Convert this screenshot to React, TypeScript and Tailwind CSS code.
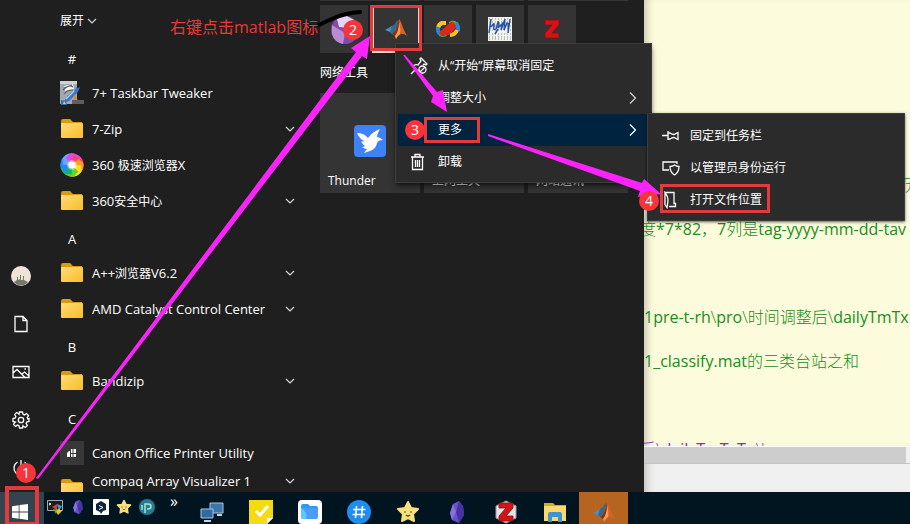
import type { ReactNode } from "react";

function Folder() {
  return (
    <svg viewBox="0 0 24 24" className="size-6 shrink-0" aria-hidden="true">
      <defs>
        <linearGradient id="folder" x1="0" y1="0" x2="1" y2="1">
          <stop offset="0" stopColor="#ffdc72" />
          <stop offset="1" stopColor="#f8bd2c" />
        </linearGradient>
      </defs>
      <path d="M1 4q0-2 2-2h7l3 3h9v6H1z" fill="#d99a12" />
      <rect x="1" y="6" width="22" height="15" rx="1" fill="url(#folder)" />
    </svg>
  );
}

function Tweaker() {
  return (
    <svg viewBox="0 0 24 24" className="size-6 shrink-0" aria-hidden="true">
      <path d="M0 0h17v23H0z" fill="#a4a9b0" />
      <path d="M0 0h17v3H0z" fill="#d0d2d5" />
      <path d="M4 5l9-2 1 5-9 2z" fill="#f2f2ee" />
      <path d="M3 9q6-6 10-3M4 13q3-4 9-4M4 7l8-3" stroke="#555b66" strokeWidth="1.2" fill="none" />
      <path d="M3 22l5-8 7-5 1-3 2 1 2-1-2 5-9 9z" fill="#3d77bd" />
      <path d="M6 18l8-8" stroke="#a9d0f5" strokeWidth="1.5" />
      <path d="M13 20l2-7 3 7z" fill="#d98b2b" />
      <path d="M12 19h12v4H12z" fill="#5f5f62" />
      <path d="M1 19l5 1 1 4H1z" fill="#2d6fbb" />
      <path d="M4 20l2 3H3z" fill="#f1d13a" />
    </svg>
  );
}

function Swirl() {
  const petals = ["#ff3f6e", "#ff9a1f", "#ffe11c", "#62d52a", "#12b07a", "#2288ff", "#6aa6ff", "#e545e0"];
  return (
    <svg viewBox="-12 -12 24 24" className="size-6 shrink-0" aria-hidden="true">
      {petals.map((color, i) => (
        <path key={color} d="M0 -3C5 -7 9 -4 11.500 0A11.500 11.500 0 0 0 4 -10.800C1 -11.500 -3 -9 0 -3z" fill={color} transform={`rotate(${i * 45 + 20})`} />
      ))}
      {petals.map((color, i) => (
        <path key={color} d="M0 0L-3 -9A9.500 9.500 0 0 1 5 -8z" fill={color} transform={`rotate(${i * 45 + 20})`} />
      ))}
      <circle r="5" fill="#fff" fillOpacity=".4" />
      <circle r="3.600" fill="#fff" />
    </svg>
  );
}

function Printer() {
  return (
    <svg viewBox="0 0 24 24" className="size-6 shrink-0" aria-hidden="true">
      <rect width="24" height="24" fill="#383838" />
      <path d="M7 16v-4l2-2h1v6zM11 8h5v4h-5zM11 13h5v3h-5z" fill="#fff" />
      <path d="M13 8v8" stroke="#383838" />
    </svg>
  );
}

function Chevron({ right = false, className = "" }: { right?: boolean; className?: string }) {
  return (
    <svg viewBox="0 0 12 12" className={className} fill="none" stroke="currentColor" aria-hidden="true">
      <path d={right ? "M3 0.500l5.500 5.500-5.500 5.500" : "M2 4l4 4 4-4"} strokeWidth="1.200" />
    </svg>
  );
}

function Matlab({ className = "size-6" }: { className?: string }) {
  return (
    <svg viewBox="0 0 24 24" className={className} aria-hidden="true">
      <path d="M1 13l7-4 4 3-4 5-2-2z" fill="#4a8fc0" />
      <path d="M8 9q3-1 5-6l1 2-3 10-3 2-2-2z" fill="#2b6d96" />
      <path d="M15 2q2 2 4 9l4 8q-4-3-6-2-3 1-5 5-1-4-4-5 5-3 7-15z" fill="#d9622b" />
      <path d="M15 2q1 9-1 14l-2 6q-1-4-4-5 5-3 7-15z" fill="#8e2c1b" />
      <path d="M15 5q2 7 1 12-2 1-4 5l-1-3q4-5 4-14z" fill="#f3a044" />
    </svg>
  );
}

function ZIcon({ boxed = false }: { boxed?: boolean }) {
  return (
    <svg viewBox="0 0 24 24" className="size-6" aria-hidden="true">
      {boxed && <path d="M12 1l10 5v12l-10 5L2 18V6z" fill="#e2e4e6" stroke="#9a9c9f" />}
      <path d="M5 3h14v5l-7 8h7v5H5v-5l7-8H5z" fill="#d41414" stroke="#8b0c0c" strokeWidth=".8" />
    </svg>
  );
}

function Crystal({ className = "size-6" }: { className?: string }) {
  return (
    <svg viewBox="0 0 24 24" className={className} aria-hidden="true">
      <path d="M14 1l4 5 1 9-5 8-7-3-2-7 3-9z" fill="#6a50cf" />
      <path d="M14 1l-3 11 3 11 5-8-1-9z" fill="#4732a0" />
      <path d="M8 4l3 8-4 8-2-7z" fill="#8a70e0" />
    </svg>
  );
}

function Star({ className = "size-6" }: { className?: string }) {
  return (
    <svg viewBox="0 0 24 24" className={className} aria-hidden="true">
      <path d="M12 2l3 6 7 1-5 5 1 7-6-3-6 3 1-7-5-5 7-1z" fill="#f7e07e" stroke="#f7e07e" strokeWidth="2" strokeLinejoin="round" />
      <path d="M8 12h2M14 12h2M10 15q2 2 4 0" stroke="#6b5317" strokeWidth="1.200" fill="none" />
    </svg>
  );
}

const listItems: { id: string; label: ReactNode; icon?: ReactNode; group?: boolean }[] = [
  { id: "number", label: "#" },
  { id: "tweaker", label: "7+ Taskbar Tweaker", icon: <Tweaker /> },
  { id: "7zip", label: "7-Zip", icon: <Folder />, group: true },
  { id: "360x", label: <>360 <span className="text-xs">极速浏览器</span>X</>, icon: <Swirl /> },
  { id: "360safe", label: <>360<span className="text-xs">安全中心</span></>, icon: <Folder />, group: true },
  { id: "a", label: "A" },
  { id: "app", label: <>A++<span className="text-xs">浏览器</span>V6.2</>, icon: <Folder />, group: true },
  { id: "amd", label: "AMD Catalyst Control Center", icon: <Folder />, group: true },
  { id: "b", label: "B" },
  { id: "bandizip", label: "Bandizip", icon: <Folder />, group: true },
  { id: "c", label: "C" },
  { id: "canon", label: "Canon Office Printer Utility", icon: <Printer /> },
];

function Rail() {
  const cell = "flex h-12 w-full items-center justify-center";
  return (
    <nav className="flex w-[42px] shrink-0 flex-col justify-end text-white">
      <button aria-label="Account" className={cell}>
        <svg viewBox="0 0 20 20" className="size-5">
          <circle cx="10" cy="10" r="10" fill="#eee3d5" />
          <path d="M3 16l3-2v-3h1v3l2-1V9h1v5h2v-4h1v4l4 2q-3 3.500-7 3.500T3 16z" fill="#77776a" />
        </svg>
      </button>
      <button aria-label="Documents" className={cell}>
        <svg viewBox="0 0 16 18" className="h-[18px] w-4" fill="none" stroke="currentColor" strokeWidth="1.300">
          <path d="M2 1.500h8l4 4v11H2zM10 1.500v4h4" />
        </svg>
      </button>
      <button aria-label="Pictures" className={cell}>
        <svg viewBox="0 0 18 14" className="h-3.5 w-[18px]" fill="none" stroke="currentColor" strokeWidth="1.300">
          <path d="M1 1.500h16v11H1zM1 8l4-3.500 8 8M10 9l2.500-2 4.500 4M12.500 4h1.500" />
        </svg>
      </button>
      <button aria-label="Settings" className={cell}>
        <svg viewBox="-9 -9 18 18" className="size-[18px]" fill="none" stroke="currentColor" strokeWidth="1.300">
          <path d="M-1.500-8h3l.5 2.300 1.500.6 2-1.300 2 2-1.300 2 .6 1.400L8-1.500v3L5.700 2l-.6 1.500 1.300 2-2 2-2-1.300L2 5.700 1.500 8h-3L-2 5.700l-1.500-.6-2 1.300-2-2 1.300-2L-5.700 2-8 1.500v-3l2.300-.5.6-1.500-1.300-2 2-2 2 1.300L-2-5.700z" />
          <circle r="2.700" />
        </svg>
      </button>
      <button aria-label="Power" className={cell}>
        <svg viewBox="0 0 18 18" className="size-[18px]" fill="none" stroke="currentColor" strokeWidth="1.300">
          <path d="M9 1v8M5.500 3a7 7 0 1 0 7 0" />
        </svg>
      </button>
    </nav>
  );
}

function AppList() {
  return (
    <div className="flex w-[278px] shrink-0 flex-col overflow-hidden pt-[3px] pr-6 pl-[18px] text-[13px] leading-5 text-white">
      <button className="flex h-9 shrink-0 items-center gap-0.5 text-xs">
        展开
        <Chevron className="size-3 text-gray-300" />
      </button>
      <ul>
        {listItems.map((item) => (
          <li key={item.id} className="h-9">
            {item.icon ? (
              <button className="flex size-full items-center gap-2 text-left whitespace-nowrap">
                {item.icon}
                <span className="flex-1">{item.label}</span>
                {item.group && <Chevron className="size-3 text-gray-300" />}
              </button>
            ) : (
              <h3 className="w-6 pt-2.5 text-center">{item.label}</h3>
            )}
          </li>
        ))}
        <li>
          <button className="flex w-full items-start gap-2 text-left">
            <span className="pt-1.5"><Folder /></span>
            <span className="flex-1">Compaq Array Visualizer 1</span>
            <Chevron className="mt-1 size-3 text-gray-300" />
          </button>
        </li>
      </ul>
    </div>
  );
}

const bigTile = "flex size-[100px] flex-col bg-[#343434] px-2 pt-8 pb-1 text-left text-xs text-white";
const smallTile = "flex size-12 items-center justify-center bg-[#343434]";

function Tiles() {
  return (
    <div className="flex flex-1 flex-col">
      <div className="flex h-px gap-1">
        <span className="w-[100px] bg-[#343434]" />
        <span className="w-[100px] bg-[#343434]" />
        <span className="w-[100px] bg-[#343434]" />
      </div>
      <div className="mt-1 flex gap-1">
        <button aria-label="Visual Studio" className={smallTile}>
          <svg viewBox="0 0 48 48" className="size-12 overflow-visible">
            <circle cx="25" cy="25" r="14" fill="#8648ab" />
            <path d="M17 14l8-4 9 5-4 8-11-1z" fill="#e6d5f2" />
            <path d="M12 20l13 8-2 11q-9-2-11-10z" fill="#b98bd3" />
            <path d="M-1 20q8-4 15-7 12-5 26-6" fill="none" stroke="#000" strokeWidth="4" strokeLinecap="round" />
          </svg>
        </button>
        <button aria-label="MATLAB" className={`${smallTile} border-2 border-[#f0d4d4]`}><Matlab /></button>
        <button aria-label="Browser" className={smallTile}>
          <svg viewBox="0 0 24 24" className="size-6" fill="none" strokeWidth="4">
            <path d="M10 6H6q-3 1-4 5" stroke="#ffc51f" />
            <path d="M2 10q-1 5 3 8" stroke="#2b83dc" />
            <path d="M4 17q3 2 6 0" stroke="#37a63a" />
            <path d="M14 7q3-3 6 0" stroke="#49b53c" />
            <path d="M20 6q3 4 2 8" stroke="#2b83dc" />
            <path d="M21 13q-2 5-7 5" stroke="#ffc51f" />
            <path d="M7 16l9-8" stroke="#df2618" strokeWidth="6" strokeLinecap="round" />
            <path d="M12 16l6-6" stroke="#df2618" strokeWidth="4" strokeLinecap="round" />
          </svg>
        </button>
        <button aria-label="Signature" className={smallTile}>
          <svg viewBox="0 0 24 24" className="size-6">
            <rect width="24" height="24" fill="#f3f3ee" />
            <path d="M1 2h22M1 5h22M1 9h22M1 13h22M1 17h22M1 20h22M1 22h22" stroke="#8f8f88" strokeDasharray="1 2" />
            <path d="M3 2q-1 8-2 14M3 10q4-6 3-1t2 3l2-7q2 1 0 6l4-4-1 6 4-11-1 11 3-7q2 0 1 6M22 2l-2 14M10 12l-3 5" fill="none" stroke="#2454a8" strokeWidth="1.500" />
          </svg>
        </button>
        <button aria-label="Z" className={smallTile}><ZIcon /></button>
      </div>
      <h2 className="flex h-10 items-center text-xs text-white">网络工具</h2>
      <div className="flex gap-1">
        <button className={bigTile}>
          <svg viewBox="0 0 32 32" className="ml-[26px] size-8 shrink-0" aria-hidden="true">
            <rect width="32" height="32" rx="4" fill="#3f82f7" />
            <path d="M3 8q7 0 11 5 4-6 12-9-3 5-3 8 2 0 6 3-5 0-6 3-1 6-7 8-3 1-6 2 2-3 3-4-3 0-5-2 2 0 3-1-3-2-4-5 2 1 3 0-5-3-7-8z" fill="#fff" />
          </svg>
          <span className="mt-auto">Thunder</span>
        </button>
        <button className={bigTile}><span className="mt-auto">上网工具</span></button>
        <button className={bigTile}><span className="mt-auto">网站通讯</span></button>
      </div>
    </div>
  );
}

function Editor() {
  const line = "h-11 leading-[44px]";
  return (
    <main className="flex min-w-0 flex-1 flex-col bg-[#f0f0f0] shadow-[inset_8px_0_8px_-6px_#88888088]">
      <div className="flex-1 overflow-hidden border-b border-white bg-[#fcfbdc] pt-[163px] text-base whitespace-nowrap text-[#228b22] shadow-[inset_8px_0_8px_-6px_#88888088]">
        <div className="-ml-1">
          <p className={`${line} pl-[262px] font-light`}>历年</p>
          <p className={`${line} font-light`}>
            度<b className="font-medium">*7*82</b>，<b className="font-medium">7</b>列是<b className="font-medium">tag-yyyy-mm-dd-tav</b>
          </p>
          <p className={line} />
          <p className={`${line} pl-1 font-light`}>
            <b className="font-medium">1pre-t-rh</b>\<b className="font-medium">pro</b>\时间调整后\<b className="font-medium">dailyTmTx</b>
          </p>
          <p className={`${line} pl-1 font-light`}>
            <b className="font-medium">1_classify.mat</b>的三类台站之和
          </p>
          <p className={line} />
          <p className={`${line} font-light text-[#9121d6]`}>
            后\<b className="font-medium">dailyTmTxTn</b>\';
          </p>
        </div>
      </div>
      <div className="h-[17px] shrink-0 border-b border-[#c4c4c4] pr-1"><div className="h-4 bg-[#cdcdcd]" /></div>
      <div className="h-7 shrink-0" />
    </main>
  );
}

const menuRow = "flex h-8 w-full items-center text-left text-xs text-white";
const menuIcon = "mr-2.5 size-[18px] shrink-0";

function ContextMenu() {
  return (
    <div role="menu" className="absolute top-[43px] left-[395px] w-[257px] border border-[#3c3c3c] bg-[#2b2b2b] px-0.5 pt-1.5 pb-1 shadow-md shadow-black/50">
      <button role="menuitem" className={`${menuRow} pl-3`}>
        <svg viewBox="0 0 18 18" className={menuIcon} fill="none" stroke="currentColor" strokeWidth="1.300">
          <path d="M1 17l5-5M3 9l6 6M3 9q2-2 5-1l3-4-1-2 1-1 6 6-1 1-2-1-1 1M9 15l0-2" />
          <circle cx="12.500" cy="12.500" r="3.500" />
          <path d="M10 15l5-5" />
        </svg>
        从“开始”屏幕取消固定
      </button>
      <button role="menuitem" className={`${menuRow} pr-2.5 pl-10`}>
        <span className="flex-1">调整大小</span>
        <Chevron right className="size-3 text-gray-300" />
      </button>
      <div className="pr-0.5">
        <button role="menuitem" className={`${menuRow} bg-[#00233f] pr-2 pl-10`}>
          <span className="flex-1">更多</span>
          <Chevron right className="size-3" />
        </button>
      </div>
      <button role="menuitem" className={`${menuRow} pl-3`}>
        <svg viewBox="0 0 18 18" className={menuIcon} fill="none" stroke="currentColor" strokeWidth="1.300">
          <path d="M1 4h13M5 4V1.500h5V4M2.500 4v12.500h10V4M5.500 7v7M7.500 7v7M9.500 7v7" />
        </svg>
        卸载
      </button>
    </div>
  );
}

function SubMenu() {
  return (
    <div role="menu" className="absolute top-[113px] left-[647px] w-[258px] border border-[#3c3c3c] bg-[#2b2b2b] pt-1.5 pb-1 pl-3.5 shadow-sm shadow-black/50">
      <button role="menuitem" className={menuRow}>
        <svg viewBox="0 0 18 18" className={menuIcon} fill="none" stroke="currentColor" strokeWidth="1.300">
          <path d="M0 8.500h6M6 4v9M6 6h2q2 1.500 4 1.500l4-2v7l-4-2q-2 0-4 1.500H6" />
        </svg>
        固定到任务栏
      </button>
      <button role="menuitem" className={menuRow}>
        <svg viewBox="0 0 18 18" className={menuIcon} fill="none" stroke="currentColor" strokeWidth="1.300">
          <path d="M7 11H1V3h14v2" />
          <path d="M12.500 6q2 1.500 4.500 1.500 0 6-4.500 8.500-4.500-2.500-4.500-8.500 2.500 0 4.500-1.500z" />
        </svg>
        以管理员身份运行
      </button>
      <button role="menuitem" className={menuRow}>
        <svg viewBox="0 0 18 18" className={menuIcon} fill="none" stroke="currentColor" strokeWidth="1.300">
          <path d="M3 1.500q3 4 3 7t-1 8l-2-3zM3 1.500h9v11h1.500v3H7" />
        </svg>
        打开文件位置
      </button>
    </div>
  );
}

const taskApps: { name: string; icon: ReactNode }[] = [
  {
    name: "Remote Desktop",
    icon: (
      <svg viewBox="0 0 24 24" className="size-6">
        <path d="M10 3h13v10H10z" fill="#3b77ae" stroke="#a9c7dc" />
        <path d="M1 9h12v9H1z" fill="#2e6aa6" stroke="#a9c7dc" />
        <path d="M4 21h7M17 15h5" stroke="#c5d1d8" strokeWidth="2" />
      </svg>
    ),
  },
  {
    name: "Notes",
    icon: (
      <svg viewBox="0 0 24 24" className="size-6">
        <path d="M0 0h24v18l-6 6H0z" fill="#f5dc12" />
        <path d="M18 24v-6h6z" fill="#fff" />
        <path d="M7 11l4 4 8-9" stroke="#fff" strokeWidth="3" fill="none" />
      </svg>
    ),
  },
  {
    name: "Files",
    icon: (
      <svg viewBox="0 0 24 24" className="size-6">
        <rect width="24" height="24" rx="4" fill="#fff" />
        <path d="M3 6q0-2 2-2h5l2 2h6q2 0 2 2v3H3z" fill="#2f9bf0" />
        <path d="M3 8h15q2 0 2 2v7q0 2-2 2H5q-2 0-2-2z" fill="#4a9ef8" />
        <path d="M3 8q7 4 5 11H5q-2 0-2-2z" fill="#5fc8fa" />
      </svg>
    ),
  },
  {
    name: "Channels",
    icon: (
      <svg viewBox="0 0 24 24" className="size-6">
        <circle cx="12" cy="12" r="12" fill="#1e8df0" />
        <path d="M9.500 6l-1 12M15.500 6l-1 12M6 9.500h12.500M5.500 14.500H18" stroke="#fff" strokeWidth="1.600" />
      </svg>
    ),
  },
  { name: "Star", icon: <Star /> },
  { name: "Crystal", icon: <Crystal /> },
  { name: "Zotero", icon: <ZIcon boxed /> },
  {
    name: "Explorer",
    icon: (
      <svg viewBox="0 0 24 24" className="size-6">
        <path d="M1 3h9l2 2h11v5H1z" fill="#e0a526" />
        <path d="M1 6h22v15H1z" fill="#fbd96a" />
        <path d="M5 22v-8q0-2 2-2h10q2 0 2 2v8h-4v-5H9v5z" fill="#3e93d1" />
      </svg>
    ),
  },
];

function Taskbar() {
  return (
    <footer className="flex h-8 shrink-0 overflow-hidden bg-[#001520]">
      <div className="flex h-10">
        <button aria-label="Start" className="flex w-[44px] items-center justify-center bg-[#34444e] pr-1">
          <svg viewBox="0 0 16 16" className="size-4">
            <path d="M0 2.200l6.700-1v6.400H0zM7.500 1.100L16 0v7.600H7.500zM0 8.400h6.700v6.400L0 13.800zM7.500 8.400H16V16l-8.500-1.200z" fill="#fff" />
          </svg>
        </button>
        <div className="flex h-[30px] w-[143px] items-center gap-[7px] pl-[3px]">
          <svg viewBox="0 0 16 16" className="size-4">
            <path d="M0.500 1.500h15v10h-15z" fill="#1c1c1c" stroke="#aaa" />
            <path d="M2 4l2 1-2 1" stroke="#fff" fill="none" />
            <path d="M5 8l5-3v6z" fill="#e43c32" />
            <path d="M10 5l5 2-3 5z" fill="#33a0e8" />
            <path d="M8 11l4-1 3 2-4 4z" fill="#efc12b" />
            <path d="M6 10l4 1-1 4z" fill="#4cb648" />
          </svg>
          <Crystal className="size-4" />
          <svg viewBox="0 0 16 16" className="size-4">
            <rect width="16" height="16" rx="1" fill="#fff" />
            <path d="M8 2l5 3v6l-3 1-2 3-1-2-4-2V5z" fill="#10253c" />
            <path d="M6 6.500l4 2-4 2" stroke="#fff" fill="none" />
          </svg>
          <Star className="size-4" />
          <svg viewBox="0 0 16 16" className="size-4">
            <circle cx="8" cy="8" r="8" fill="#277b91" />
            <path d="M6 14V5h3q3 0 3 2.500T9 10H8M3 11V6" stroke="#a7e4d7" strokeWidth="1.500" fill="none" />
          </svg>
          <span className="mb-3 pl-2 text-base leading-4 text-white">»</span>
        </div>
        {taskApps.map((app) => (
          <button key={app.name} aria-label={app.name} className="flex w-[49px] items-center justify-center">
            {app.icon}
          </button>
        ))}
        <button aria-label="MATLAB" className="flex w-[49px] items-center justify-center bg-[#b5651f]">
          <Matlab />
        </button>
      </div>
    </footer>
  );
}

const badge = "absolute flex size-5 items-center justify-center rounded-full bg-[#f9333a] text-sm text-white";

function Annotations() {
  return (
    <div className="pointer-events-none absolute inset-0">
      <p className="absolute top-[15px] left-[170px] text-base whitespace-nowrap text-[#e8383a]">右键点击matlab图标</p>
      <div className="absolute top-[486px] left-[5px] h-10 w-[34px] border-4 border-[#e33a3d]" />
      <div className="absolute top-[5px] left-[370px] h-[46px] w-[52px] border-[3px] border-[#e33a3d]" />
      <div className="absolute top-[117px] left-[424px] h-[26px] w-14 border-[3px] border-[#e33a3d]" />
      <div className="absolute top-[184px] left-[660px] h-[29px] w-[110px] border-[3px] border-[#e33a3d]" />
      <svg className="absolute top-0 left-0 h-[524px] w-[910px]" viewBox="0 0 910 524" fill="#fb23fb">
        <path d="M36 478L356 52 351 48 370 36 367 59 362 56 38 479z" />
        <path d="M403 55L405 55 437 92 443 90 447 112 431 102 433 96z" />
        <path d="M488 134L642 183 644 179 661 194 638 197 640 191 488 136z" />
      </svg>
      <span className={`${badge} top-[463px] left-4`}>1</span>
      <span className={`${badge} top-5 left-[343px]`}>2</span>
      <span className={`${badge} top-[120px] left-[405px]`}>3</span>
      <span className={`${badge} top-[191px] left-[639px]`}>4</span>
    </div>
  );
}

export default function App() {
  return (
    <div className="relative flex h-screen flex-col overflow-hidden bg-[#1f1f1f] font-['Open_Sans','Noto_Sans_CJK_SC',sans-serif]">
      <div className="flex min-h-0 flex-1">
        <section className="flex w-[644px] shrink-0 overflow-hidden bg-[#1f1f1f]">
          <Rail />
          <AppList />
          <Tiles />
        </section>
        <Editor />
      </div>
      <Taskbar />
      <ContextMenu />
      <SubMenu />
      <Annotations />
    </div>
  );
}
